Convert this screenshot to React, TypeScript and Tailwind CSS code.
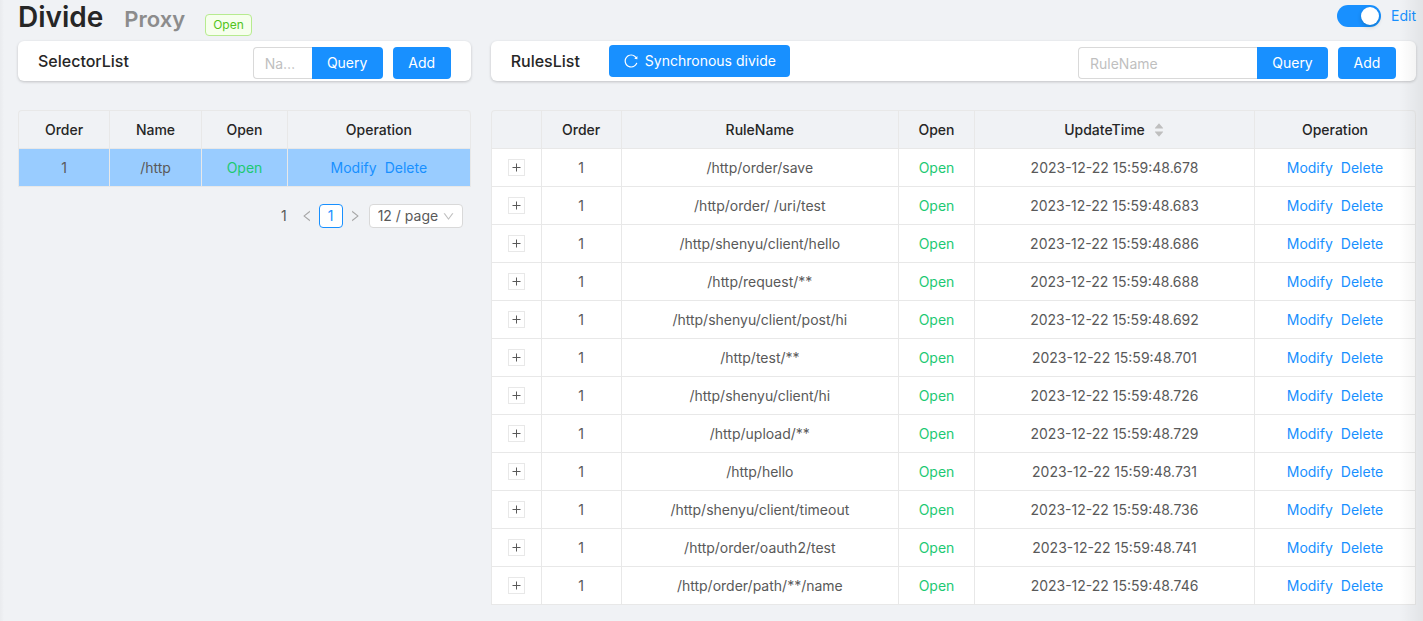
import { useState } from "react";
import {
  AiFillCaretDown,
  AiFillCaretUp,
  AiOutlineDown,
  AiOutlineLeft,
  AiOutlineReload,
  AiOutlineRight,
} from "react-icons/ai";

const rules = [
  { name: "/http/order/save", time: "2023-12-22 15:59:48.678" },
  { name: "/http/order/ /uri/test", time: "2023-12-22 15:59:48.683" },
  { name: "/http/shenyu/client/hello", time: "2023-12-22 15:59:48.686" },
  { name: "/http/request/**", time: "2023-12-22 15:59:48.688" },
  { name: "/http/shenyu/client/post/hi", time: "2023-12-22 15:59:48.692" },
  { name: "/http/test/**", time: "2023-12-22 15:59:48.701" },
  { name: "/http/shenyu/client/hi", time: "2023-12-22 15:59:48.726" },
  { name: "/http/upload/**", time: "2023-12-22 15:59:48.729" },
  { name: "/http/hello", time: "2023-12-22 15:59:48.731" },
  { name: "/http/shenyu/client/timeout", time: "2023-12-22 15:59:48.736" },
  { name: "/http/order/oauth2/test", time: "2023-12-22 15:59:48.741" },
  { name: "/http/order/path/**/name", time: "2023-12-22 15:59:48.746" },
];

const cardClass =
  "flex h-10 items-center rounded-md bg-white px-5 shadow-[0_1px_3px_rgba(0,0,0,0.2)]";
const titleClass = "text-base font-medium text-[#262626]";
const tableClass =
  "mt-[29px] w-full table-fixed border-separate border-spacing-0 rounded-t border-t border-l border-[#e8e8e8] text-center";
const headCell = "h-[38px] border-r border-b border-[#e8e8e8] font-medium text-[#262626]";
const bodyCell = "h-[38px] border-r border-b border-[#e8e8e8]";
const button = "h-8 shrink-0 rounded bg-[#1890ff] px-[14px] text-white";

function SearchGroup({ placeholder, inputWidth }: { placeholder: string; inputWidth: string }) {
  return (
    <div className="mt-1 ml-auto flex">
      <input
        type="text"
        aria-label={placeholder}
        placeholder={placeholder}
        className={`${inputWidth} h-8 rounded-l border border-r-0 border-[#d9d9d9] bg-white pr-[9px] pl-[11px] text-ellipsis outline-none placeholder:text-[#bfbfbf]`}
      />
      <button type="button" className="h-8 w-[71px] rounded-r bg-[#1890ff] text-white">
        Query
      </button>
      <button type="button" className={`${button} ml-[10px] w-[58px]`}>
        Add
      </button>
    </div>
  );
}

function Actions() {
  return (
    <div className="flex justify-center gap-2 text-[#1890ff]">
      <a href="#modify">Modify</a>
      <a href="#delete">Delete</a>
    </div>
  );
}

export default function App() {
  const [enabled, setEnabled] = useState(true);

  return (
    <div className="relative min-h-screen bg-[#f0f2f5] pr-[7px] pb-4 pl-[18px] font-['Inter','Liberation_Sans',sans-serif] text-sm text-[#595959]">
      <header className="flex h-[41px] items-start justify-between">
        <div className="flex items-start gap-5">
          <div className="flex items-baseline gap-[21px]">
            <h1 className="text-[28px] leading-[34px] font-semibold text-[#262626]">Divide</h1>
            <span className="text-[22px] leading-7 font-semibold text-[#8c8c8c]">Proxy</span>
          </div>
          <span className="mt-[14px] rounded border border-[#b7eb8f] bg-[#f6ffed] px-[7px] text-xs leading-5 text-[#52c41a]">
            Open
          </span>
        </div>
        <div className="flex items-center gap-[10px] pt-[5px]">
          <label className="relative flex h-[22px] w-11 cursor-pointer">
            <input
              type="checkbox"
              role="switch"
              aria-label="Enable plugin"
              checked={enabled}
              onChange={(e) => setEnabled(e.target.checked)}
              className="peer h-full w-full appearance-none rounded-full bg-black/25 checked:bg-[#1890ff]"
            />
            <span className="pointer-events-none absolute top-[2px] left-[2px] size-[18px] rounded-full bg-white shadow-[0_2px_4px_rgba(0,35,11,0.2)] peer-checked:left-6" />
          </label>
          <a href="#edit" className="text-[#1890ff]">
            Edit
          </a>
        </div>
      </header>

      <main className="grid grid-cols-3 gap-5">
        <section>
          <div className={cardClass}>
            <h2 className={titleClass}>SelectorList</h2>
            <SearchGroup placeholder="Name" inputWidth="w-[59px]" />
          </div>
          <table className={tableClass}>
            <colgroup>
              <col className="w-[91px]" />
              <col className="w-[92px]" />
              <col className="w-[86px]" />
              <col />
            </colgroup>
            <thead>
              <tr>
                <th className={`${headCell} rounded-tl`}>Order</th>
                <th className={headCell}>Name</th>
                <th className={headCell}>Open</th>
                <th className={`${headCell} rounded-tr`}>Operation</th>
              </tr>
            </thead>
            <tbody>
              <tr className="bg-[#99ccff]">
                <td className={bodyCell}>1</td>
                <td className={bodyCell}>/http</td>
                <td className={`${bodyCell} text-[#1dc973]`}>Open</td>
                <td className={bodyCell}>
                  <Actions />
                </td>
              </tr>
            </tbody>
          </table>
          <nav aria-label="Pagination" className="mt-[17px] mr-2 flex h-6 items-center justify-end">
            <span className="mr-2">1</span>
            <button type="button" aria-label="Previous page" className="flex size-6 items-center justify-center text-[#a6a6a6]">
              <AiOutlineLeft className="size-[14px]" />
            </button>
            <button type="button" className="size-6 rounded border border-[#1890ff] bg-white text-[#1890ff]">
              1
            </button>
            <button type="button" aria-label="Next page" className="flex size-6 items-center justify-center text-[#a6a6a6]">
              <AiOutlineRight className="size-[14px]" />
            </button>
            <div className="relative ml-[2px]">
              <select
                aria-label="Page size"
                className="h-6 w-[94px] appearance-none rounded border border-[#d9d9d9] bg-white pl-2"
              >
                <option>12 / page</option>
                <option>24 / page</option>
              </select>
              <AiOutlineDown className="pointer-events-none absolute top-[6px] right-2 size-[13px] text-[#bfbfbf]" />
            </div>
          </nav>
        </section>

        <section className="col-span-2">
          <div className={cardClass}>
            <h2 className={titleClass}>RulesList</h2>
            <button type="button" className={`${button} ml-[29px] flex items-center gap-[6px]`}>
              <AiOutlineReload className="size-4" />
              Synchronous divide
            </button>
            <SearchGroup placeholder="RuleName" inputWidth="w-[179px]" />
          </div>
          <table className={tableClass}>
            <colgroup>
              <col className="w-[50px]" />
              <col className="w-20" />
              <col />
              <col className="w-[76px]" />
              <col className="w-[280px]" />
              <col className="w-[161px]" />
            </colgroup>
            <thead>
              <tr>
                <th className={`${headCell} rounded-tl`} aria-label="Expand" />
                <th className={headCell}>Order</th>
                <th className={headCell}>RuleName</th>
                <th className={headCell}>Open</th>
                <th className={headCell}>
                  <button type="button" className="inline-flex items-center gap-2">
                    UpdateTime
                    <span className="flex flex-col text-[#bfbfbf]">
                      <AiFillCaretUp className="-mb-1 size-3" />
                      <AiFillCaretDown className="size-3" />
                    </span>
                  </button>
                </th>
                <th className={`${headCell} rounded-tr`}>Operation</th>
              </tr>
            </thead>
            <tbody>
              {rules.map((rule) => (
                <tr key={rule.name} className="bg-white">
                  <td className={bodyCell}>
                    <button
                      type="button"
                      aria-label={`Expand ${rule.name}`}
                      className="mx-auto flex size-[17px] items-center justify-center border border-[#e8e8e8] bg-white"
                    >
                      <svg viewBox="0 0 9 9" className="size-[9px]" stroke="#595959" strokeWidth="1">
                        <path d="M0.5 4.5h8M4.5 0.5v8" />
                      </svg>
                    </button>
                  </td>
                  <td className={bodyCell}>1</td>
                  <td className={bodyCell}>{rule.name}</td>
                  <td className={`${bodyCell} text-[#1dc973]`}>Open</td>
                  <td className={bodyCell}>{rule.time}</td>
                  <td className={bodyCell}>
                    <Actions />
                  </td>
                </tr>
              ))}
            </tbody>
          </table>
        </section>
      </main>

      <div className="pointer-events-none absolute inset-y-0 left-0 w-1 bg-linear-to-l from-transparent to-black/3" />
      <div className="pointer-events-none absolute inset-y-0 right-0 w-6 bg-linear-to-r from-transparent to-black/6" />
    </div>
  );
}
